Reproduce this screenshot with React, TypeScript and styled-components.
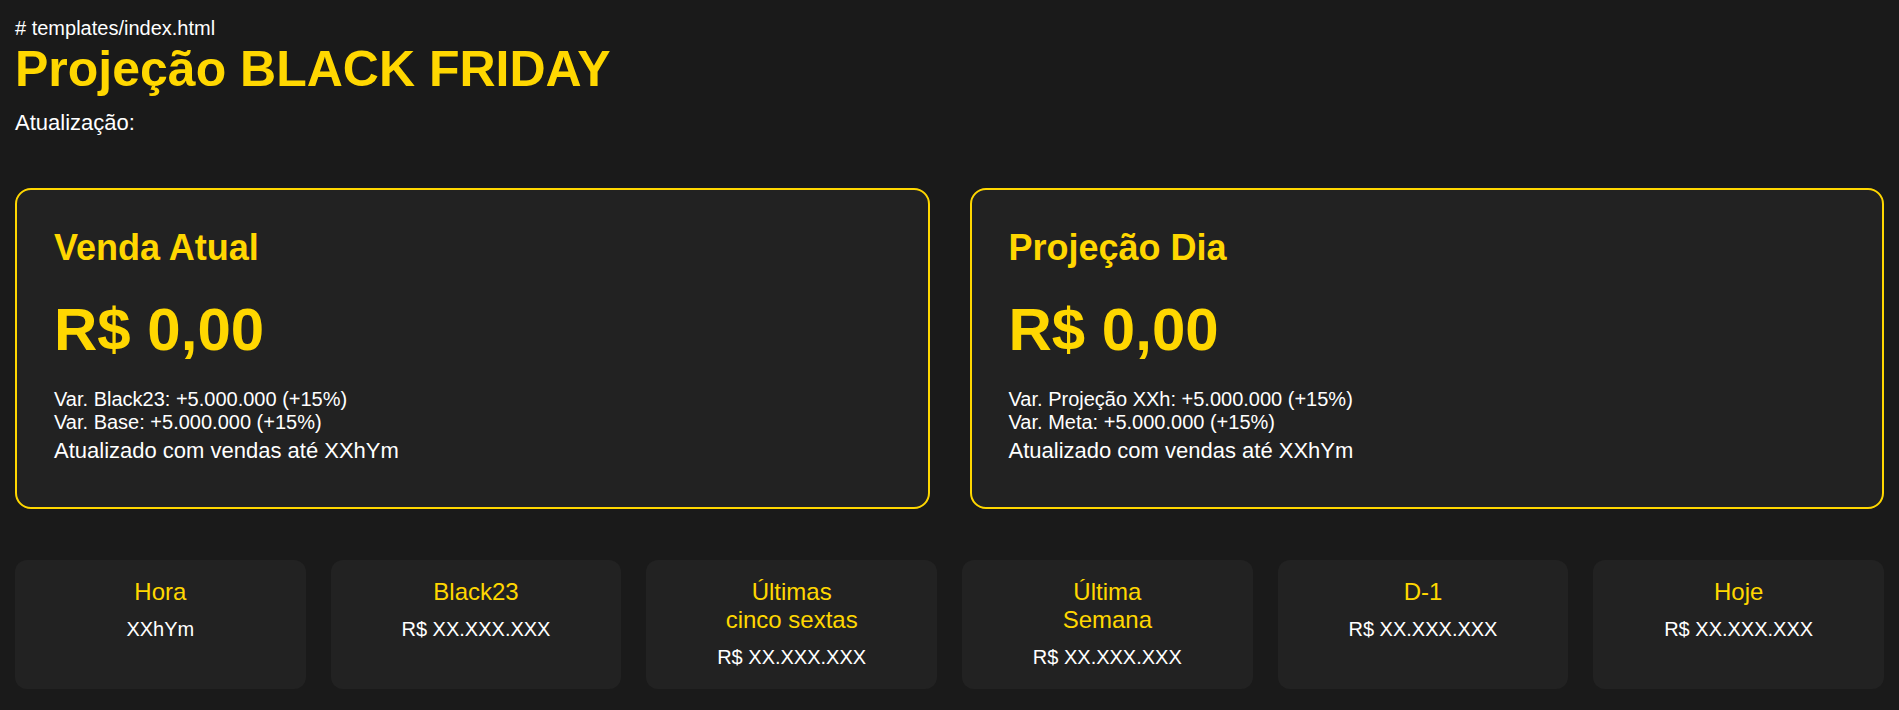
import React from 'react';
import styled, { createGlobalStyle } from 'styled-components';

const GOLD = '#FFD700';

const GlobalStyle = createGlobalStyle`
  body {
    margin: 0;
    background: #1a1a1a;
    color: #ffffff;
    font-family: "Liberation Sans", Arial, sans-serif;
  }
`;

const Page = styled.div`
  padding: 17.4px 15px 20px;
`;

const PathLabel = styled.div`
  font-size: 20px;
`;

const Title = styled.h1`
  margin: 0;
  font-size: 50px;
  font-weight: 700;
  color: ${GOLD};
`;

const Updated = styled.div`
  margin-top: 12.1px;
  font-size: 22px;
`;

const MainGrid = styled.div`
  display: grid;
  grid-template-columns: 1fr 1fr;
  gap: 40px;
  margin-top: 51.2px;
`;

const BigCard = styled.section`
  background: #222222;
  border: 2px solid ${GOLD};
  border-radius: 16px;
  padding: 37px 37px 42.2px;
`;

const CardTitle = styled.h2`
  margin: 0;
  font-size: 36px;
  font-weight: 700;
  color: ${GOLD};
`;

const BigValue = styled.div`
  margin-top: 26px;
  font-size: 60px;
  font-weight: 700;
  color: ${GOLD};
`;

const VarList = styled.div`
  margin-top: 24.7px;
  font-size: 20px;
`;

const Note = styled.div`
  margin-top: 4px;
  font-size: 22px;
`;

const StatsGrid = styled.div`
  display: grid;
  grid-template-columns: repeat(6, 1fr);
  gap: 25px;
  margin-top: 51px;
`;

const StatCard = styled.div`
  background: #222222;
  border-radius: 12px;
  padding: 18px 12px 20px;
  text-align: center;
`;

const StatLabel = styled.div`
  font-size: 24px;
  color: ${GOLD};
`;

const StatValue = styled.div`
  margin-top: 12.8px;
  font-size: 20px;
`;

type Highlight = {
  title: string;
  lines: string[];
};

const highlights: Highlight[] = [
  {
    title: 'Venda Atual',
    lines: ['Var. Black23: +5.000.000 (+15%)', 'Var. Base: +5.000.000 (+15%)'],
  },
  {
    title: 'Projeção Dia',
    lines: ['Var. Projeção XXh: +5.000.000 (+15%)', 'Var. Meta: +5.000.000 (+15%)'],
  },
];

const stats = [
  { label: ['Hora'], value: 'XXhYm' },
  { label: ['Black23'], value: 'R$ XX.XXX.XXX' },
  { label: ['Últimas', 'cinco sextas'], value: 'R$ XX.XXX.XXX' },
  { label: ['Última', 'Semana'], value: 'R$ XX.XXX.XXX' },
  { label: ['D-1'], value: 'R$ XX.XXX.XXX' },
  { label: ['Hoje'], value: 'R$ XX.XXX.XXX' },
];

const App = () => (
  <>
    <GlobalStyle />
    <Page>
      <PathLabel># templates/index.html</PathLabel>
      <Title>Projeção BLACK FRIDAY</Title>
      <Updated>Atualização:</Updated>

      <MainGrid>
        {highlights.map(h => (
          <BigCard key={h.title}>
            <CardTitle>{h.title}</CardTitle>
            <BigValue>R$ 0,00</BigValue>
            <VarList>
              {h.lines.map(line => <div key={line}>{line}</div>)}
            </VarList>
            <Note>Atualizado com vendas até XXhYm</Note>
          </BigCard>
        ))}
      </MainGrid>

      <StatsGrid>
        {stats.map(s => (
          <StatCard key={s.label.join(' ')}>
            <StatLabel>
              {s.label.map(part => <div key={part}>{part}</div>)}
            </StatLabel>
            <StatValue>{s.value}</StatValue>
          </StatCard>
        ))}
      </StatsGrid>
    </Page>
  </>
);

export default App;
